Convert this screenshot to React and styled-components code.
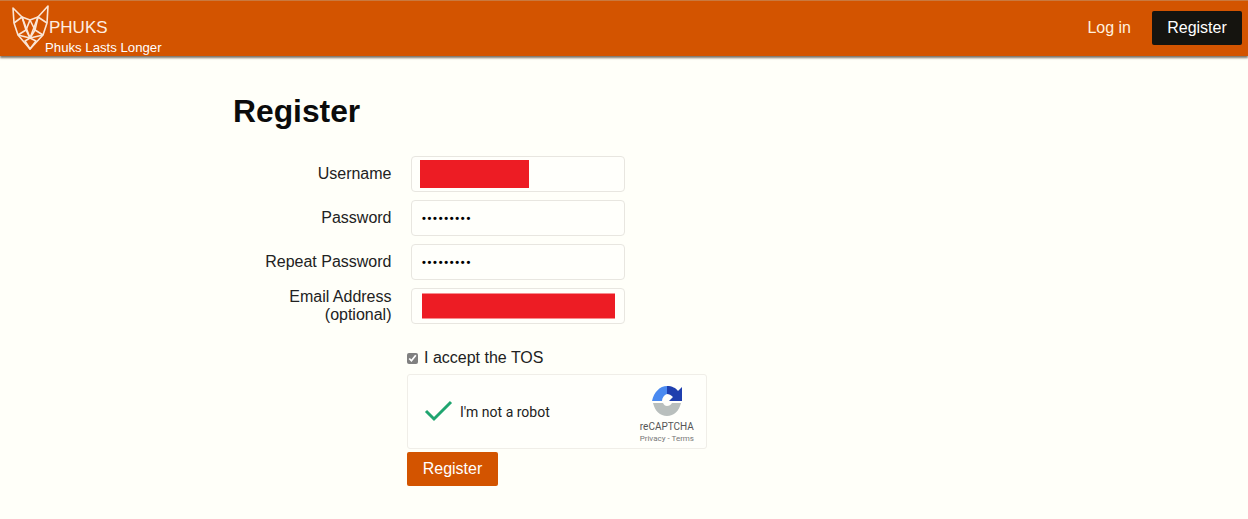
import styled, { createGlobalStyle } from "styled-components";

const GlobalStyle = createGlobalStyle`
  html, body {
    margin: 0;
    background: #fffff9;
    color: #111;
    font-family: "Liberation Sans", Arial, sans-serif;
  }
`;

function FoxLogo() {
  return (
    <svg width="38" height="46" viewBox="0 0 38 46" fill="none" stroke="#fbe6d6" strokeWidth="1.6" strokeLinejoin="round">
      <path d="M1 3 L10 12 L18 15 L26 12 L36 1 L35 18 L31 30 L18 44 L6 30 L2 18 Z" />
      <path d="M2 18 L10 12 L14 25 L6 30" />
      <path d="M35 18 L26 12 L23 25 L31 30" />
      <path d="M18 15 L14 25 L18 33 L23 25 Z" />
      <path d="M10 12 L18 33 L26 12" />
      <path d="M6 30 L18 33 L31 30" />
      <path d="M13 36 L18 33 L24 36 L18 44 Z" />
    </svg>
  );
}

function RecaptchaLogo() {
  return (
    <svg width="32" height="32" viewBox="0 0 32 32">
      <path d="M16 1 C9 1 3 7 1 16 L11 16 C11 13 13 10 16 9 Z" fill="#4a8af0" />
      <path d="M16 1 C21 1 25 3 27 6 L31 2 L31 16 L18 16 L22 12 C20 10 18 9 16 9 Z" fill="#1f3fae" />
      <path d="M2 18 L12 18 C13 20 14 21 16 21 C18 21 20 20 21 18 L30 18 C28 26 23 31 16 31 C9 31 4 26 2 18 Z" fill="#b9bfbd" />
    </svg>
  );
}

function FormField({ label, children }) {
  return (
    <FieldRow>
      <FieldLabel>{label}</FieldLabel>
      <FieldBox>{children}</FieldBox>
    </FieldRow>
  );
}

export default function App() {
  return (
    <>
      <GlobalStyle />
      <Header>
        <Brand>
          <FoxLogo />
          <BrandText>
            <BrandName>PHUKS</BrandName>
            <Tagline>Phuks Lasts Longer</Tagline>
          </BrandText>
        </Brand>
        <Nav>
          <NavLink>Log in</NavLink>
          <NavButton>Register</NavButton>
        </Nav>
      </Header>
      <Main>
        <Title>Register</Title>
        <Fields>
          <FormField label="Username">
            <Redaction $width={109} $height={28} $left={8} />
          </FormField>
          <FormField label="Password">
            <Dots>•••••••••</Dots>
          </FormField>
          <FormField label="Repeat Password">
            <Dots>•••••••••</Dots>
          </FormField>
          <FormField label={<>Email Address<br />(optional)</>}>
            <Redaction $width={193} $height={25} $left={10} />
          </FormField>
        </Fields>
        <Actions>
          <TosRow>
            <TosCheck type="checkbox" defaultChecked />
            I accept the TOS
          </TosRow>
          <Captcha>
            <CaptchaLeft>
              <svg width="30" height="22" viewBox="0 0 30 22" fill="none">
                <path d="M2 11 L10 19 L27 2" stroke="#1fa56f" strokeWidth="3" />
              </svg>
              <CaptchaText>I'm not a robot</CaptchaText>
            </CaptchaLeft>
            <CaptchaBrand>
              <RecaptchaLogo />
              <CaptchaName>reCAPTCHA</CaptchaName>
              <CaptchaLinks>Privacy - Terms</CaptchaLinks>
            </CaptchaBrand>
          </Captcha>
          <SubmitButton>Register</SubmitButton>
        </Actions>
      </Main>
    </>
  );
}

const Header = styled.header`
  box-sizing: border-box;
  height: 56px;
  display: flex;
  align-items: center;
  justify-content: space-between;
  padding: 0 6px 0 12px;
  background: #d35400;
  border-top: 1px solid #c9793f;
  box-shadow: 0 2px 2px #7d7468;
`;

const Brand = styled.div`
  display: flex;
  align-items: flex-start;
  height: 50px;
  margin-top: 2px;
`;

const BrandText = styled.div`
  display: flex;
  flex-direction: column;
  margin-left: -1px;
  color: #fdeee2;
`;

const BrandName = styled.div`
  font-size: 17px;
  line-height: 21px;
  margin-top: 12px;
`;

const Tagline = styled.div`
  font-size: 13.2px;
  line-height: 16px;
  margin: 2px 0 0 -4px;
  color: #fff;
`;

const Nav = styled.nav`
  display: flex;
  align-items: center;
  gap: 21px;
  margin-top: -2px;
`;

const NavLink = styled.a`
  font-size: 16px;
  color: #fff0df;
`;

const NavButton = styled.a`
  width: 90px;
  height: 34px;
  display: flex;
  align-items: center;
  justify-content: center;
  background: #15140f;
  border-radius: 2px;
  color: #fff;
  font-size: 16px;
`;

const Main = styled.main`
  padding: 35px 0 0 233px;
`;

const Title = styled.h1`
  margin: 0 0 25px;
  font-size: 31.8px;
  line-height: 40px;
  font-weight: bold;
  color: #0b0b0b;
`;

const Fields = styled.div`
  display: flex;
  flex-direction: column;
  gap: 8px;
`;

const FieldRow = styled.div`
  display: flex;
  align-items: center;
`;

const FieldLabel = styled.label`
  width: 158.5px;
  margin-right: 19.5px;
  text-align: right;
  font-size: 16px;
  line-height: 18px;
  color: #222;
`;

const FieldBox = styled.div`
  position: relative;
  box-sizing: border-box;
  width: 214px;
  height: 36px;
  padding: 0 10px;
  display: flex;
  align-items: center;
  background: #fffffb;
  border: 1px solid #e8e6e0;
  border-radius: 4px;
`;

const Redaction = styled.div`
  position: absolute;
  top: 50%;
  left: ${({ $left }) => $left}px;
  width: ${({ $width }) => $width}px;
  height: ${({ $height }) => $height}px;
  transform: translateY(-50%);
  background: #ed1c24;
`;

const Dots = styled.span`
  font-family: "Liberation Sans", sans-serif;
  font-size: 11px;
  letter-spacing: 1.7px;
  font-weight: bold;
  color: #000;
`;

const Actions = styled.div`
  margin: 25px 0 0 174px;
  display: flex;
  flex-direction: column;
  align-items: flex-start;
`;

const TosRow = styled.label`
  display: flex;
  align-items: center;
  gap: 6px;
  height: 18px;
  margin-bottom: 7px;
  font-size: 16px;
  color: #222;
`;

const TosCheck = styled.input`
  width: 11px;
  height: 11px;
  margin: 1px 0 0 0;
  accent-color: #808080;
`;

const Captcha = styled.div`
  box-sizing: border-box;
  width: 300px;
  height: 75px;
  display: flex;
  justify-content: space-between;
  background: #fffffb;
  border: 1px solid #f0eee8;
  border-radius: 3px;
  padding: 0 12px 0 16px;
`;

const CaptchaLeft = styled.div`
  display: flex;
  align-items: center;
  gap: 6px;
  margin-bottom: 2px;
`;

const CaptchaText = styled.span`
  font-family: Roboto, sans-serif;
  font-size: 14px;
  margin-top: 2px;
  color: #222;
`;

const CaptchaBrand = styled.div`
  display: flex;
  flex-direction: column;
  align-items: center;
  padding-top: 10px;
`;

const CaptchaName = styled.div`
  font-family: Roboto, sans-serif;
  font-size: 10px;
  line-height: 12px;
  margin-top: 4px;
  color: #555;
`;

const CaptchaLinks = styled.div`
  font-family: Roboto, sans-serif;
  font-size: 8px;
  line-height: 12px;
  color: #777;
`;

const SubmitButton = styled.button`
  width: 91px;
  height: 34px;
  margin-top: 3px;
  background: #d35400;
  border: 0;
  border-radius: 2px;
  color: #fff;
  font-family: inherit;
  font-size: 16px;
`;
